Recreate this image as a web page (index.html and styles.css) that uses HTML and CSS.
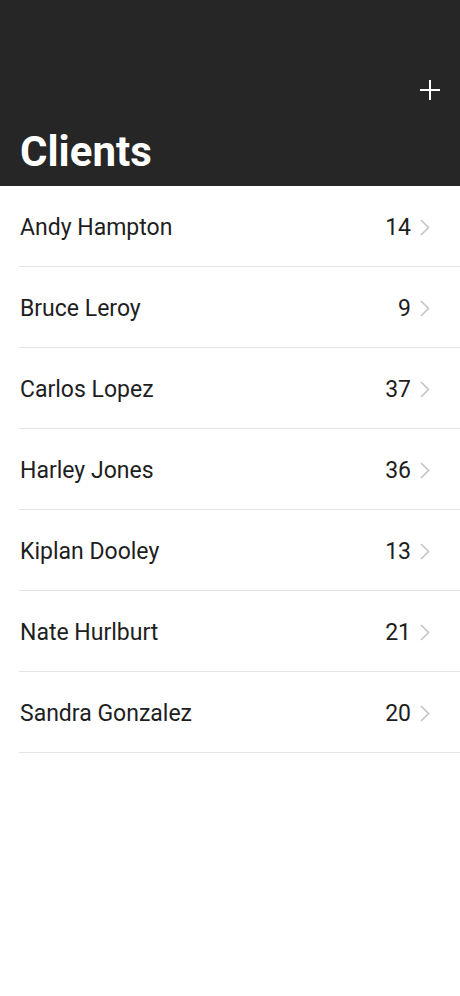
FILE: index.html
```html
<!DOCTYPE html>
<html lang="en">
<head>
    <meta charset="UTF-8">
    <meta name="viewport" content="width=device-width, initial-scale=1.0">
    <title>Clients</title>
    <link rel="stylesheet" href="styles.css">
</head>
<body>
    <header class="top-bar">
        <div class="actions">
            <!-- add client -->
            <svg class="add" width="22" height="22" viewBox="0 0 22 22">
                <path d="M11 1v20M1 11h20" stroke="#fff" stroke-width="2" fill="none"/>
            </svg>
        </div>
        <h1 class="title">Clients</h1>
    </header>

    <ul class="client-list">
        <li class="client"><span class="name">Andy Hampton</span><span class="count">14</span><svg class="chevron" width="10" height="17" viewBox="0 0 10 17"><path d="M1 1l7.5 7.5L1 16" /></svg></li>
        <li class="client"><span class="name">Bruce Leroy</span><span class="count">9</span><svg class="chevron" width="10" height="17" viewBox="0 0 10 17"><path d="M1 1l7.5 7.5L1 16" /></svg></li>
        <li class="client"><span class="name">Carlos Lopez</span><span class="count">37</span><svg class="chevron" width="10" height="17" viewBox="0 0 10 17"><path d="M1 1l7.5 7.5L1 16" /></svg></li>
        <li class="client"><span class="name">Harley Jones</span><span class="count">36</span><svg class="chevron" width="10" height="17" viewBox="0 0 10 17"><path d="M1 1l7.5 7.5L1 16" /></svg></li>
        <li class="client"><span class="name">Kiplan Dooley</span><span class="count">13</span><svg class="chevron" width="10" height="17" viewBox="0 0 10 17"><path d="M1 1l7.5 7.5L1 16" /></svg></li>
        <li class="client"><span class="name">Nate Hurlburt</span><span class="count">21</span><svg class="chevron" width="10" height="17" viewBox="0 0 10 17"><path d="M1 1l7.5 7.5L1 16" /></svg></li>
        <li class="client"><span class="name">Sandra Gonzalez</span><span class="count">20</span><svg class="chevron" width="10" height="17" viewBox="0 0 10 17"><path d="M1 1l7.5 7.5L1 16" /></svg></li>
    </ul>
</body>
</html>
```

FILE: styles.css
```css
body {
    margin: 0;
    font-family: Roboto, "Liberation Sans", sans-serif;
    background: #fff;
    color: #1e1e1e;
}
.top-bar {
    background-color: #262626;
    height: 186px;
    box-sizing: border-box;
    padding: 79px 19px 0 20px;
}
.actions {
    display: flex;
    justify-content: flex-end;
}
.add {
    display: block;
}
.title {
    margin: 27px 0 0;
    font-size: 42px;
    line-height: 48px;
    font-weight: bold;
    color: #fff;
}
.client-list {
    list-style: none;
    margin: 0;
    padding: 0;
}
.client {
    display: flex;
    align-items: center;
    height: 78px;
    margin-left: 19px;
    padding: 2px 30px 0 1px;
    border-bottom: 1px solid #e3e3e3;
    font-size: 23px;
}
.name {
    flex: 1;
}
.count {
    margin-right: 9px;
}
.chevron {
    display: block;
    fill: none;
    stroke: #c4c4c8;
    stroke-width: 1.6;
}
```
